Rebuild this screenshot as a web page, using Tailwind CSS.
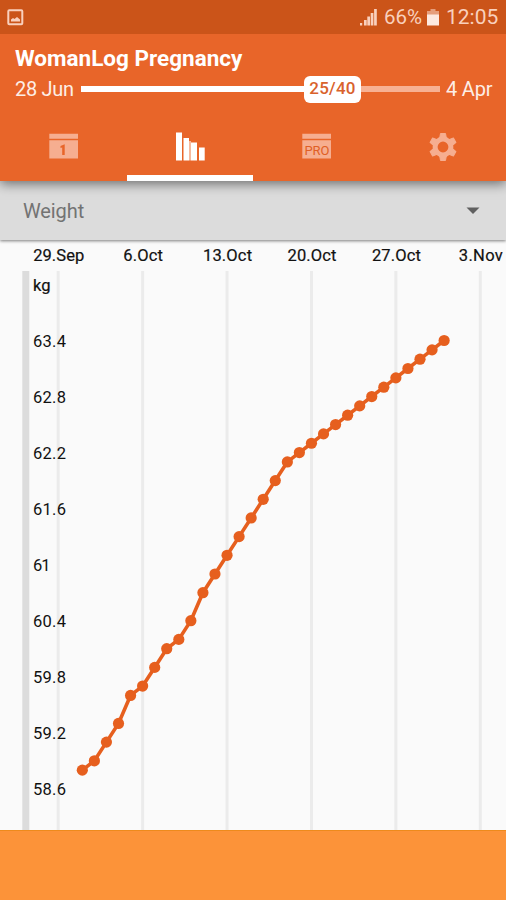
<!DOCTYPE html>
<html lang="en">
<head>
    <meta charset="UTF-8">
    <meta name="viewport" content="width=device-width, initial-scale=1.0">
    <title>WomanLog Pregnancy</title>
    <script src="https://cdn.jsdelivr.net/npm/@tailwindcss/browser@4"></script>
    <style>
        body {
            font-family: Roboto, 'Liberation Sans', sans-serif;
        }
    </style>
</head>
<body class="w-[506px] h-[900px] overflow-hidden flex flex-col bg-[#fafafa]">
    <!-- Status bar -->
    <div class="relative z-20 h-[34px] shrink-0 bg-[#cb5419] flex items-center pl-[7px] pr-[7px] text-[#f9d0bd]">
        <svg class="w-[17px] h-[17px]" viewBox="0 0 17 17">
            <rect x="1.3" y="1.3" width="14" height="14" rx="1" fill="none" stroke="currentColor" stroke-width="2"/>
            <path d="M4 12.5V10.5L6 9l1.500 1L10 8l3 2.500v2z" fill="currentColor"/>
        </svg>
        <svg class="w-[18px] h-[18px] ml-auto" viewBox="0 0 18 18" fill="currentColor">
            <path d="M0 15h2.200v2.500H0zM4 12h2.700v5.500H4zM7.300 8.500h2.700v9H7.300zM10.700 5h2.700v12.500h-2.700zM14.100 1h2.700v16.500h-2.700z"/>
        </svg>
        <span class="ml-[6px] text-[20.500px] leading-none w-[39px] whitespace-nowrap">66%</span>
        <svg class="w-[12px] h-[18px] ml-[4px]" viewBox="0 0 12 18">
            <path d="M3.500 1h5v2H12v4H0V3h3.500z" fill="currentColor" opacity=".6"/>
            <path d="M0 6.500h12V17.500H0z" fill="#fde9df"/>
        </svg>
        <span class="ml-[7px] text-[21px] leading-none w-[53px] whitespace-nowrap">12:05</span>
    </div>

    <!-- App bar -->
    <header class="relative z-10 h-[147px] shrink-0 bg-[#e86529] flex flex-col text-white shadow-[0_3px_11px_rgba(0,0,0,0.5)]">
        <h1 class="pt-[10px] pl-[15px] text-[22.500px] leading-[28px] font-bold">WomanLog Pregnancy</h1>
        <div class="h-[34px] flex items-center pl-[15px] text-[20px] text-[#fdeee6]">
            <span class="w-[66px] whitespace-nowrap tracking-[-0.3px]">28 Jun</span>
            <div class="w-[223px] h-[6px] bg-white"></div>
            <div class="w-[57px] h-[27px] rounded-[6px] bg-white text-[#d9622c] text-[17px] font-medium flex items-center justify-center tracking-[0.2px]">25/40</div>
            <div class="w-[79px] h-[6px] bg-[#f7b193]"></div>
            <span class="ml-[6px] whitespace-nowrap tracking-[-0.2px]">4 Apr</span>
        </div>
        <nav class="flex-1 grid grid-cols-4 text-[#f6ae90]">
            <a class="flex justify-center pt-[26px]">
                <svg class="w-[30px] h-[30px]" viewBox="0 0 30 30">
                    <path d="M1.300 1.800h28.700v5H1.300zM1.300 8.200h28.700v18.300H1.300z" fill="currentColor"/>
                    <path d="M12.500 14l4.200-1.800V23h-2.500v-7.500l-1.700.5z" fill="#e86529"/>
                </svg>
            </a>
            <a class="flex justify-center pt-[26px] border-b-[6px] border-white">
                <svg class="w-[30px] h-[30px]" viewBox="0 0 30 30" fill="#fff">
                    <path d="M1 0.500h6v28H1zM8.500 6h5.500v22.500H8.500zM16 10.500h6v18h-6zM24 15.500h5.700v13H24z"/>
                    <path d="M14 9h2v19.500h-2z" opacity=".55"/>
                </svg>
            </a>
            <a class="flex justify-center pt-[26px]">
                <svg class="w-[30px] h-[30px]" viewBox="0 0 30 30">
                    <path d="M1.300 1.800h28.700v5H1.300zM1.300 8.200h28.700v18.300H1.300z" fill="currentColor"/>
                    <text x="3.500" y="22.500" font-size="13" textLength="25" fill="#e05f25">PRO</text>
                </svg>
            </a>
            <a class="flex justify-center pt-[26px]">
                <svg class="w-[30px] h-[30px]" viewBox="-15 -15 30 30" fill="currentColor" stroke="currentColor">
                    <circle r="7.900" fill="none" stroke-width="5"/>
                    <g stroke-width="1" stroke-linejoin="round">
                        <path id="tooth" d="M-3.500-8L-2.500-13.500h5L3.500-8z"/>
                        <use href="#tooth" transform="rotate(60)"/>
                        <use href="#tooth" transform="rotate(120)"/>
                        <use href="#tooth" transform="rotate(180)"/>
                        <use href="#tooth" transform="rotate(240)"/>
                        <use href="#tooth" transform="rotate(300)"/>
                    </g>
                </svg>
            </a>
        </nav>
    </header>

    <!-- Chart type select -->
    <div class="h-[59px] shrink-0 bg-[#dcdcdc] flex items-center justify-between pl-[23px] pr-[26px] text-[20px] text-[#737373] shadow-[0_1px_3px_rgba(0,0,0,0.5)]">
        <span class="tracking-[-0.1px]">Weight</span>
        <svg class="w-[14px] h-[8px]" viewBox="0 0 14 8"><path d="M0.500 0.500h13l-6.500 6.500z" fill="#606060"/></svg>
    </div>

    <!-- Chart -->
    <svg id="chart" class="w-[506px] h-[590px] shrink-0" viewBox="0 240 506 590" font-size="16.500" fill="#111">
        <rect x="22.300" y="271" width="7" height="559" fill="#dcdcdc"/>
    </svg>

    <!-- Ad banner -->
    <div class="flex-1 bg-[#fc9339] border-t border-[#ee8a1c]"></div>

    <script>
const chart = document.getElementById('chart');
const weights = [
    58.8, 58.9, 59.1, 59.3, 59.6, 59.7, 59.9, 60.1, 60.2, 60.4, 60.7,
    60.9, 61.1, 61.3, 61.5, 61.7, 61.9, 62.1, 62.2, 62.3, 62.4,
    62.5, 62.6, 62.7, 62.8, 62.9, 63.0, 63.1, 63.2, 63.3, 63.4
];
const dates = ['29.Sep', '6.Oct', '13.Oct', '20.Oct', '27.Oct', '3.Nov'];
const dateWidths = [51, 39.5, 49, 49, 49, 44];
const dayX = day => 58.2 + day * 12.06;
const weightY = kg => 340.5 + (63.4 - kg) * 93.4;

function add(tag, attrs, text) {
    const el = document.createElementNS('http://www.w3.org/2000/svg', tag);
    for (const key in attrs) el.setAttribute(key, attrs[key]);
    if (text) el.textContent = text;
    chart.appendChild(el);
}

dates.forEach((date, i) => {
    const x = dayX(i * 7);
    add('rect', { x: x - 1.5, y: 271, width: 3, height: 559, fill: '#ebebeb' });
    add('text', { x: x + 0.5, y: 260.5, 'text-anchor': 'middle', textLength: dateWidths[i], stroke: '#111', 'stroke-width': 0.2 }, date);
});

add('text', { x: 33, y: 291, stroke: '#111', 'stroke-width': 0.2 }, 'kg');
for (let i = 0; i < 9; i++) {
    const kg = 63.4 - i * 0.6;
    const label = String(Number(kg.toFixed(1)));
    add('text', { x: 33, y: weightY(kg) + 6.5, textLength: label.length > 2 ? 33 : 17.5 }, label);
}

// readings start on 1 Oct, two days after the first grid line
const points = weights.map((kg, i) => [dayX(i + 2), weightY(kg)]);
add('polyline', { points: points.join(' '), fill: 'none', stroke: '#e65f1e', 'stroke-width': 3.6 });
points.forEach(([x, y]) => add('circle', { cx: x, cy: y, r: 5.6, fill: '#e65f1e' }));
    </script>
</body>
</html>
